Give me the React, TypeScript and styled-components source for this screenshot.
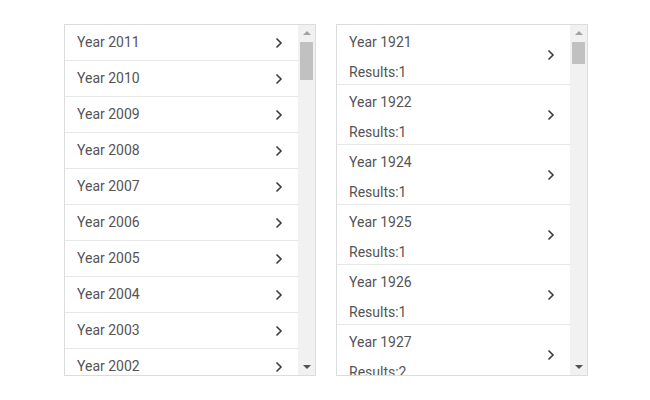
import styled, { createGlobalStyle } from "styled-components";

const Global = createGlobalStyle`
  body {
    margin: 0;
    background: #fff;
    font-family: Roboto, "Liberation Sans", sans-serif;
  }
`;

const Page = styled.div`
  display: flex;
  gap: 20px;
  padding: 24px 0 0 64px;
`;

const Panel = styled.div`
  display: flex;
  width: 250px;
  height: 350px;
  border: 1px solid #dcdcdc;
  background: #fff;
`;

const List = styled.div`
  flex: 1;
  overflow: hidden;
`;

const Scrollbar = styled.div`
  display: flex;
  flex-direction: column;
  width: 17px;
  background: #f1f1f1;
`;

const ArrowButton = styled.div<{ $down?: boolean }>`
  display: flex;
  align-items: center;
  justify-content: center;
  height: 17px;

  &::after {
    content: "";
    border-left: 4px solid transparent;
    border-right: 4px solid transparent;
    ${(p) =>
      p.$down
        ? "border-top: 4px solid #505050; margin-top: 1px;"
        : "border-bottom: 4px solid #a3a3a3; margin-top: -1px;"}
  }
`;

const Track = styled.div`
  flex: 1;
  padding: 0 2px;
`;

const Thumb = styled.div<{ $h: number }>`
  height: ${(p) => p.$h}px;
  background: #c1c1c1;
`;

const Item = styled.div<{ $tall?: boolean }>`
  display: flex;
  align-items: center;
  justify-content: space-between;
  height: ${(p) => (p.$tall ? 59 : 35)}px;
  padding: 0 14px 0 12px;
  border-bottom: 1px solid #e8e8e8;
  color: #545454;
  font-size: 14px;
`;

const Texts = styled.div`
  display: flex;
  flex-direction: column;
  gap: 10px;
  line-height: 20px;
  align-self: flex-start;
  padding-top: 7px;
`;

const Label = styled.span`
  line-height: 19px;
`;

const Chevron = () => (
  <svg width="10" height="12" viewBox="0 0 10 12" fill="none">
    <path d="M2.5 1.5 L7 6 L2.5 10.5" stroke="#3c3c3c" strokeWidth="1.6" />
  </svg>
);

const VScroll = ({ thumb }: { thumb: number }) => (
  <Scrollbar>
    <ArrowButton />
    <Track>
      <Thumb $h={thumb} />
    </Track>
    <ArrowButton $down />
  </Scrollbar>
);

const years = Array.from({ length: 10 }, (_, i) => 2011 - i);
const results = [
  [1921, 1], [1922, 1], [1924, 1], [1925, 1], [1926, 1], [1927, 2],
];

export default function App() {
  return (
    <>
      <Global />
      <Page>
        <Panel>
          <List>
            {years.map((y) => (
              <Item key={y}>
                <Label>Year {y}</Label>
                <Chevron />
              </Item>
            ))}
          </List>
          <VScroll thumb={38} />
        </Panel>
        <Panel>
          <List>
            {results.map(([y, n]) => (
              <Item $tall key={y}>
                <Texts>
                  <span>Year {y}</span>
                  <span>Results:{n}</span>
                </Texts>
                <Chevron />
              </Item>
            ))}
          </List>
          <VScroll thumb={22} />
        </Panel>
      </Page>
    </>
  );
}
